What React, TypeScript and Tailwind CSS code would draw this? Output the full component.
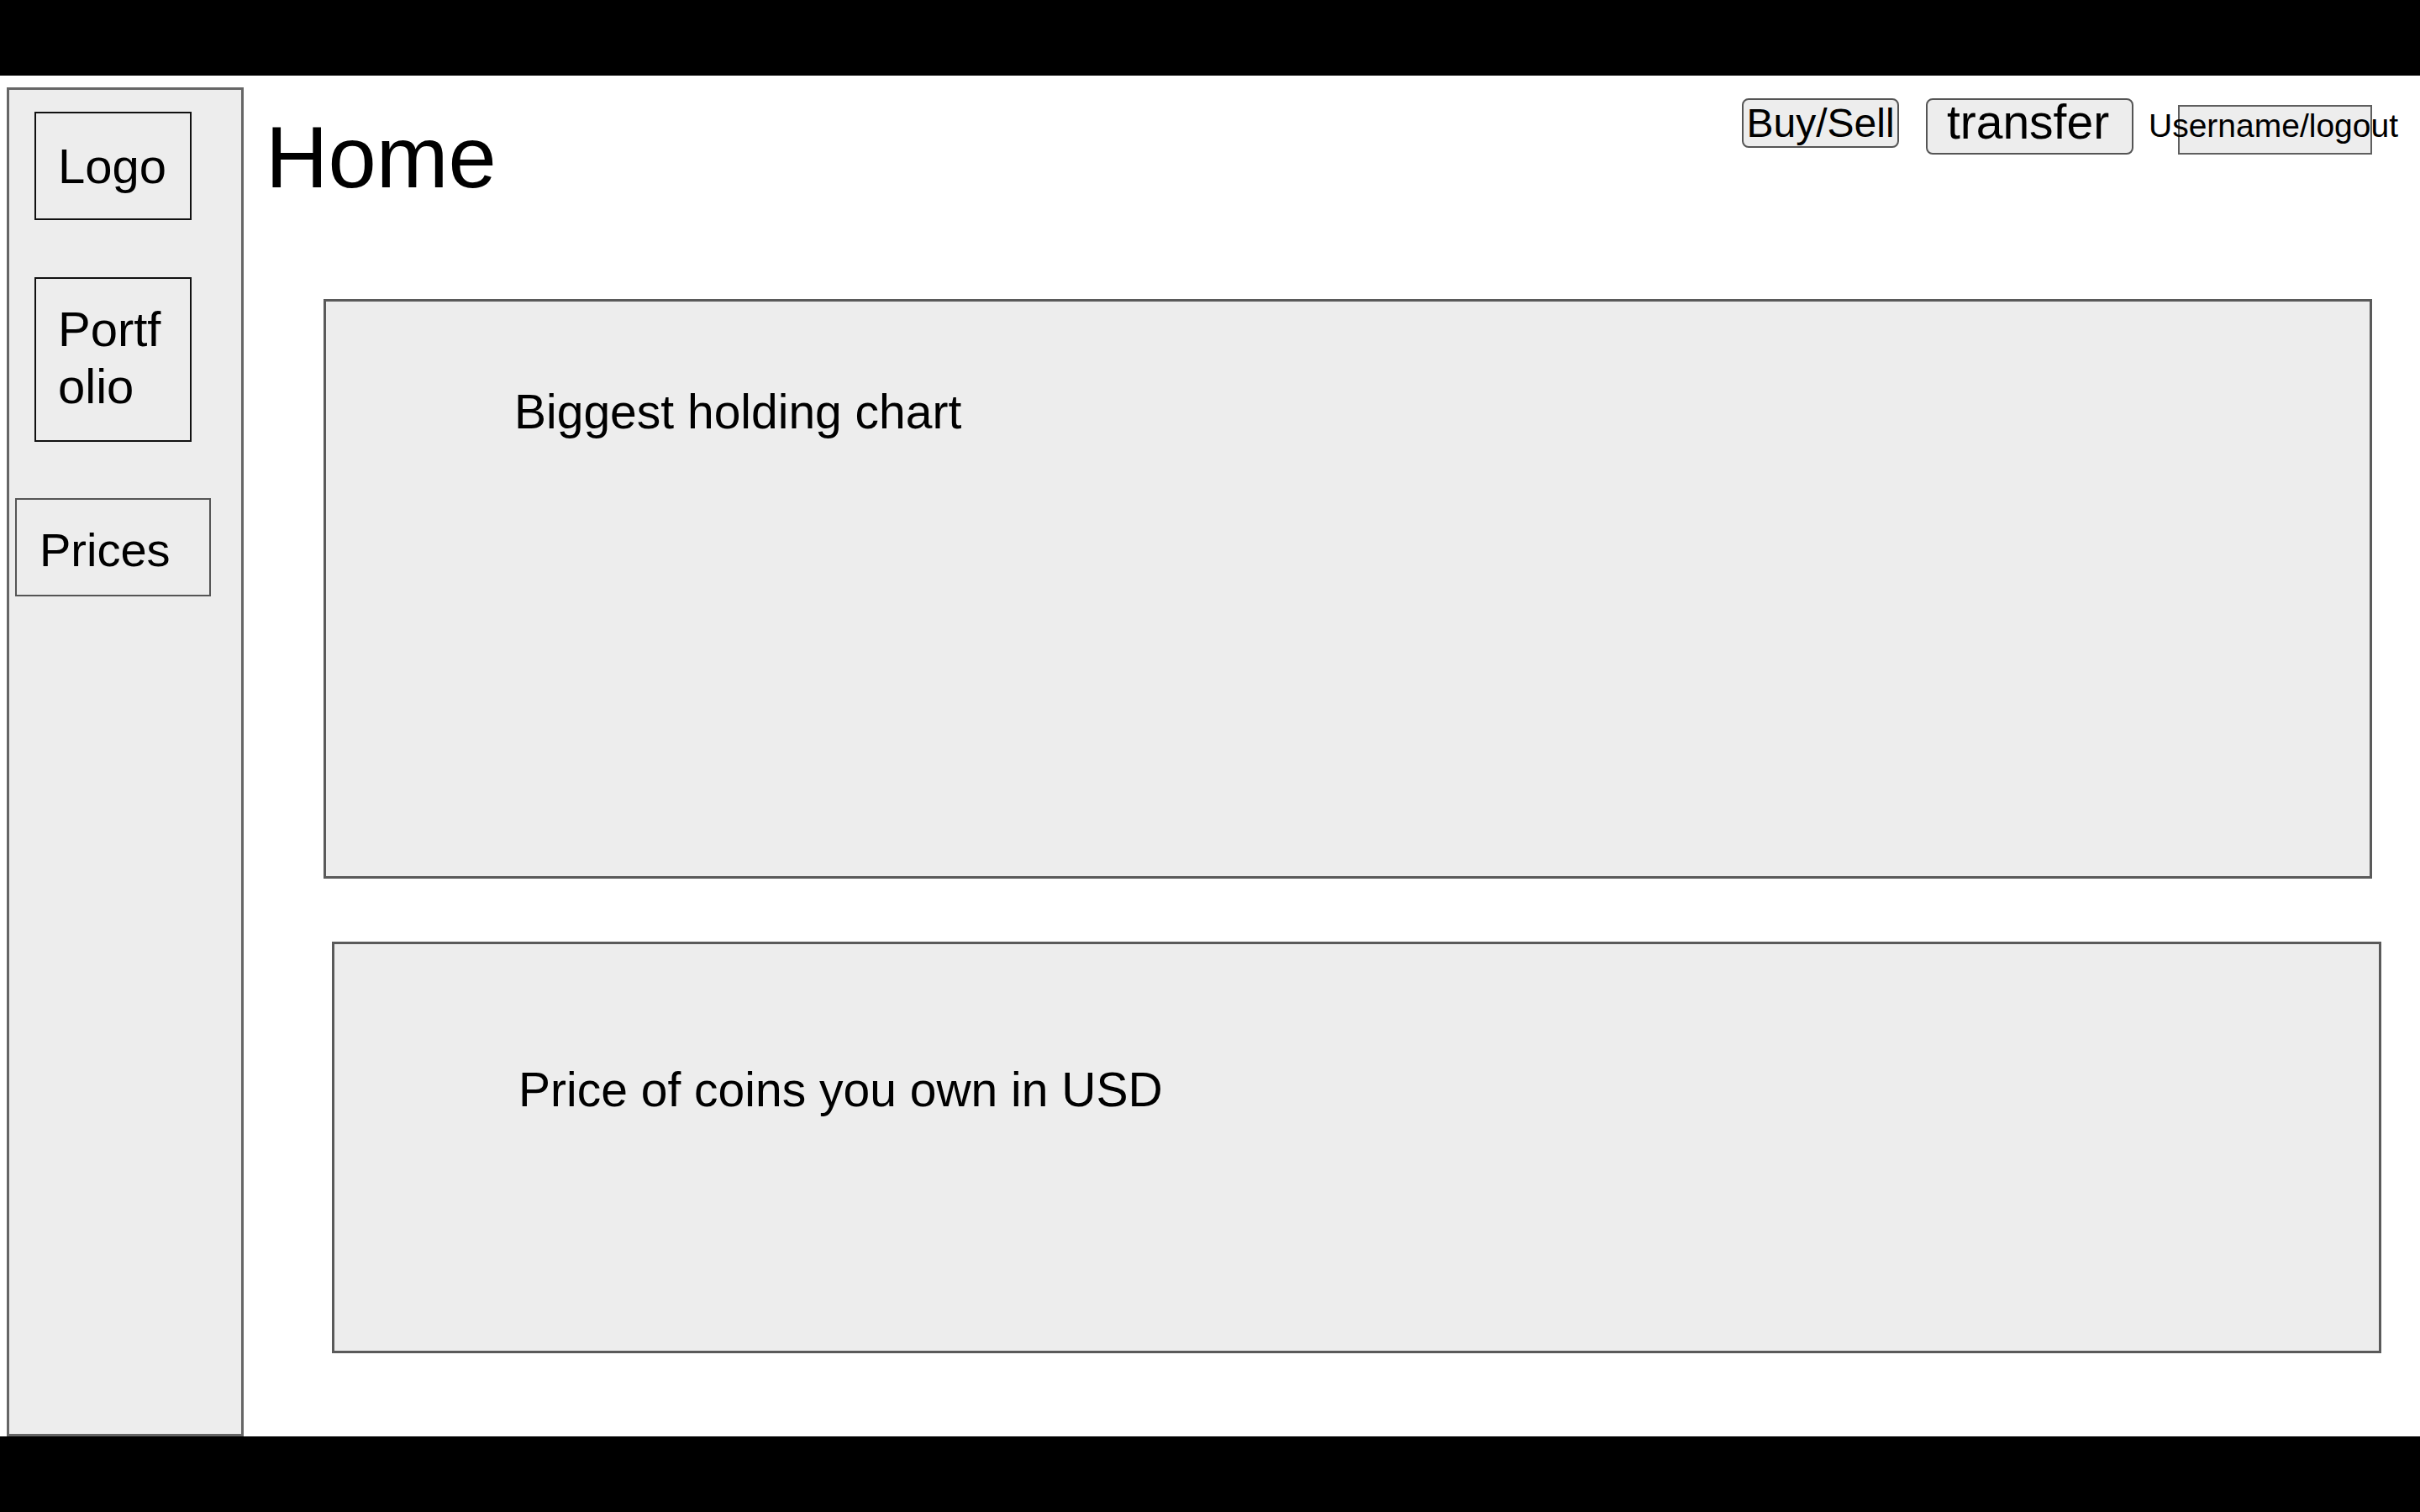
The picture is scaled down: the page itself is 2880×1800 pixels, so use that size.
import React from "react";

export default function App() {
  return (
    <div className="w-[2880px] h-[1800px] flex flex-col bg-white text-black font-['Liberation_Sans',Arial,sans-serif] overflow-hidden">
      <div className="h-[90px] bg-black shrink-0" />
      <div className="h-[1620px] flex flex-row shrink-0">
        {/* Sidebar */}
        <aside className="ml-[8px] mt-[14px] w-[282px] h-[1606px] bg-[#ededed] border-[3px] border-[#666666] flex flex-col items-start shrink-0">
          <div className="ml-[30px] mt-[26px] w-[187px] h-[129px] border-2 border-[#111111] pl-[26px] pt-[34px]">
            <span className="block text-[58px] leading-none">Logo</span>
          </div>
          <div className="ml-[30px] mt-[68px] w-[187px] h-[196px] border-2 border-[#111111] pl-[26px] pt-[26px]">
            <span className="block w-[132px] break-all text-[58px] leading-[68px]">Portfolio</span>
          </div>
          <div className="ml-[7px] mt-[67px] w-[233px] h-[117px] border-2 border-[#555555] pl-[27px] pt-[32px]">
            <span className="block text-[56px] leading-none">Prices</span>
          </div>
        </aside>

        {/* Main */}
        <main className="flex-1 flex flex-col">
          <header className="h-[266px] flex flex-row items-start shrink-0">
            <h1 className="ml-[26px] mt-[46px] text-[103px] leading-none font-normal">Home</h1>
            <div className="ml-auto mr-[57px] flex flex-row items-start">
              <button className="mt-[27px] w-[187px] h-[59px] rounded-[8px] border-2 border-[#555555] bg-[#ededed] flex items-center justify-center text-[48px] leading-none">
                Buy/Sell
              </button>
              <button className="ml-[32px] mt-[27px] w-[247px] h-[67px] rounded-[8px] border-2 border-[#555555] bg-[#ededed] flex items-start justify-center pr-[4px] text-[57px] leading-[52px]">
                transfer
              </button>
              <div className="relative ml-[53px] mt-[35px] w-[231px] h-[59px] border-2 border-[#5f5f5f] bg-[#ededed]">
                <span className="absolute left-[-37px] top-[3px] whitespace-nowrap text-[39px] leading-none">
                  Username/logout
                </span>
              </div>
            </div>
          </header>

          <section className="ml-[95px] w-[2438px] h-[690px] bg-[#ededed] border-[3px] border-[#5a5a5a] pl-[224px] pt-[103px] shrink-0">
            <p className="text-[57px] leading-none">Biggest holding chart</p>
          </section>

          <section className="ml-[105px] mt-[75px] w-[2439px] h-[490px] bg-[#ededed] border-[3px] border-[#5a5a5a] pl-[219px] pt-[145px] shrink-0">
            <p className="text-[57px] leading-none">Price of coins you own in USD</p>
          </section>
        </main>
      </div>
      <div className="h-[90px] bg-black shrink-0" />
    </div>
  );
}
